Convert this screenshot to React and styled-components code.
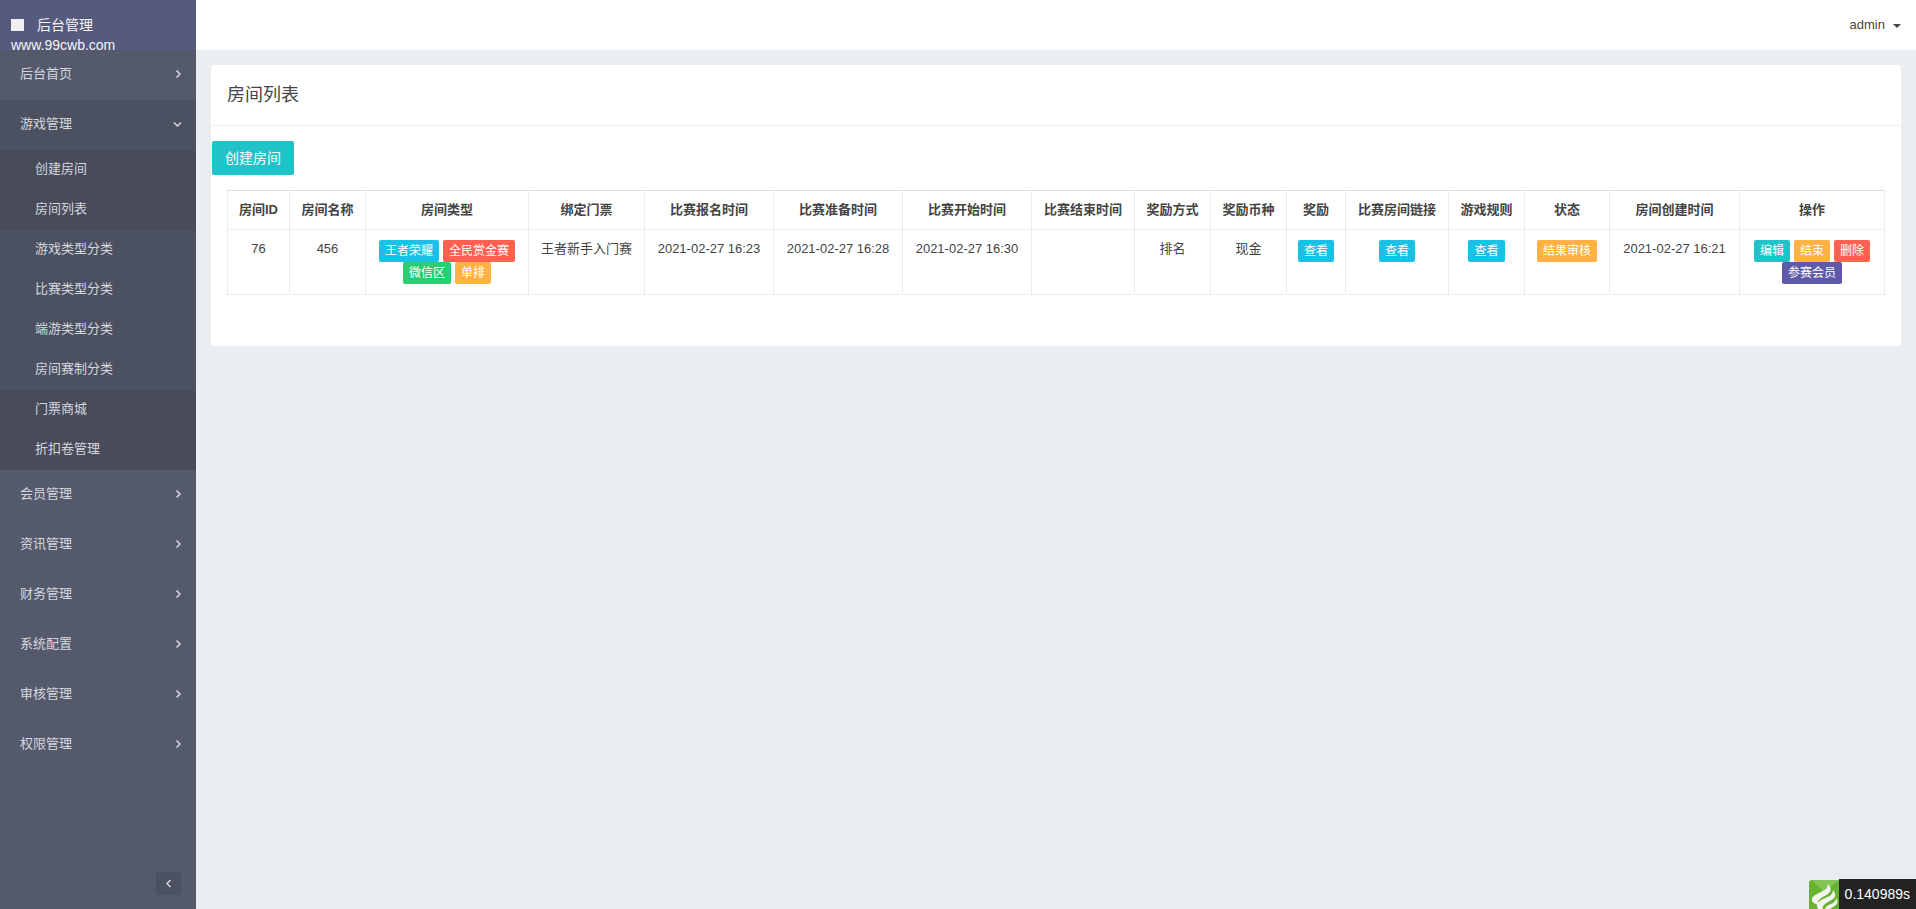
import React, { useState } from 'react';
import styled, { createGlobalStyle } from 'styled-components';

const GlobalStyle = createGlobalStyle`
  * {
    box-sizing: border-box;
  }

  body {
    background: #e9edf0;
    color: #444;
    font-family: 'Liberation Sans', 'Noto Sans CJK SC', sans-serif;
    font-size: 13px;
    line-height: 20px;
    margin: 0;
  }

  button {
    border: none;
    cursor: pointer;
    font-family: inherit;
  }
`;

const Layout = styled.div`
  display: flex;
  min-height: 100vh;
`;

const Sidebar = styled.aside`
  background: #545a6c;
  display: flex;
  flex: none;
  flex-direction: column;
  width: 196px;
`;

const Brand = styled.div`
  background: #565a7c;
  color: #f4f4f6;
  font-size: 14px;
  height: 50px;
  padding: 15px 11px 0;
`;

const BrandTitle = styled.div`
  align-items: center;
  display: flex;
  gap: 13px;
`;

const BrandMark = styled.span`
  background: #f0f0f3;
  height: 12px;
  width: 13px;
`;

const Menu = styled.ul`
  list-style: none;
  margin: 0;
  padding: 0;
`;

const MenuButton = styled.button`
  align-items: center;
  background: ${({ $open }) => ($open ? '#4c5161' : 'transparent')};
  color: #d5d7de;
  display: flex;
  font-size: 13px;
  height: 50px;
  justify-content: space-between;
  line-height: 20px;
  padding: 0 14px 2px 20px;
  width: 100%;
`;

const MenuLink = styled.a`
  background: ${({ $light }) => ($light ? '#4c5161' : '#474b5a')};
  color: #d5d7de;
  display: block;
  height: 40px;
  line-height: 20px;
  padding: 9px 35px;
  text-decoration: none;
`;

const Foot = styled.div`
  display: flex;
  justify-content: flex-end;
  margin-top: auto;
  padding: 14px 15px;
`;

const Collapse = styled.button`
  align-items: center;
  background: #4c5161;
  border-radius: 2px;
  color: #d5d7de;
  display: flex;
  height: 23px;
  justify-content: center;
  padding: 0;
  width: 25px;
`;

const Main = styled.main`
  flex: 1;
  min-width: 0;
`;

const Topbar = styled.header`
  background: #fff;
  display: flex;
  height: 50px;
  justify-content: flex-end;
  padding: 0 15px;
`;

const UserButton = styled.button`
  align-items: center;
  background: none;
  color: #444;
  display: flex;
  font-size: 13px;
  gap: 8px;
  padding: 0 0 2px;
`;

const Caret = styled.span`
  border-left: 4px solid transparent;
  border-right: 4px solid transparent;
  border-top: 4px solid #444;
  margin-top: 3px;
`;

const Panel = styled.section`
  background: #fff;
  border: 1px solid #fff;
  border-radius: 2px;
  margin: 15px;
  padding-bottom: 50px;
`;

const PanelTitle = styled.h1`
  border-bottom: 1px solid #e9edf0;
  font-size: 18px;
  font-weight: 400;
  line-height: 24px;
  margin: 0 0 15px;
  padding: 17px 15px 18px;
`;

const CreateButton = styled.button`
  background: #1fc3c8;
  border-radius: 2px;
  color: #fff;
  display: block;
  font-size: 14px;
  height: 34px;
  line-height: 20px;
  padding: 0 13px;
`;

const TableWrap = styled.div`
  padding: 15px 15px 0;
`;

const Table = styled.table`
  border-collapse: collapse;
  text-align: center;
  width: 100%;
`;

const Th = styled.th`
  border: 1px solid #e9ecf2;
  border-top-color: #ddd;
  font-weight: 700;
  padding: 9px 8px;
  white-space: nowrap;
  width: ${({ $width }) => $width}px;
`;

const Td = styled.td`
  border: 1px solid #e9ecf2;
  padding: 9px 8px;
  vertical-align: top;
  white-space: nowrap;
`;

const Tags = styled.div`
  display: flex;
  flex-wrap: wrap;
  column-gap: 4px;
  justify-content: center;
  padding: 1px 0;
`;

const colors = {
  info: '#19c1e6',
  danger: '#ff604f',
  success: '#2ecc71',
  warning: '#ffb244',
  primary: '#1fc3c8',
  purple: '#5f5aa8',
};

const Tag = styled.span`
  background: ${({ $kind }) => colors[$kind]};
  border-radius: 2px;
  color: #fff;
  font-size: 12px;
  line-height: 22px;
  padding: 0 6px;
`;

const TagButton = styled(Tag).attrs({ as: 'button', type: 'button' })``;

const Trace = styled.div`
  bottom: 0;
  display: flex;
  height: 30px;
  position: fixed;
  right: 0;
`;

const TraceTime = styled.div`
  background: #232323;
  color: #fff;
  font-size: 14px;
  line-height: 30px;
  padding: 0 6px;
`;

const submenu = [
  { name: '创建房间' },
  { name: '房间列表' },
  { name: '游戏类型分类', light: true },
  { name: '比赛类型分类', light: true },
  { name: '端游类型分类', light: true },
  { name: '房间赛制分类', light: true },
  { name: '门票商城' },
  { name: '折扣卷管理' },
];

const menu = [
  { name: '后台首页' },
  { name: '游戏管理', children: submenu },
  { name: '会员管理' },
  { name: '资讯管理' },
  { name: '财务管理' },
  { name: '系统配置' },
  { name: '审核管理' },
  { name: '权限管理' },
];

const heads = [
  ['房间ID', 62],
  ['房间名称', 76],
  ['房间类型', 163],
  ['绑定门票', 116],
  ['比赛报名时间', 129],
  ['比赛准备时间', 129],
  ['比赛开始时间', 129],
  ['比赛结束时间', 103],
  ['奖励方式', 76],
  ['奖励币种', 76],
  ['奖励', 59],
  ['比赛房间链接', 103],
  ['游戏规则', 76],
  ['状态', 85],
  ['房间创建时间', 130],
  ['操作', 145],
];

const rooms = [
  {
    id: 76,
    name: '456',
    types: [['info', '王者荣耀'], ['danger', '全民赏金赛'], ['success', '微信区'], ['warning', '单排']],
    ticket: '王者新手入门赛',
    signup: '2021-02-27 16:23',
    ready: '2021-02-27 16:28',
    start: '2021-02-27 16:30',
    end: '',
    rewardBy: '排名',
    currency: '现金',
    status: '结果审核',
    created: '2021-02-27 16:21',
  },
];

const actions = [['primary', '编辑'], ['warning', '结束'], ['danger', '删除'], ['purple', '参赛会员']];

const paths = {
  right: 'M1.5 0.5 5 4 1.5 7.5',
  left: 'M5.5 1 2 4.5 5.5 8',
  down: 'M1 2.5 4.5 6 8 2.5',
};

const Arrow = ({ to }) => (
  <svg width={to === 'down' ? 9 : 7} height="9" viewBox={to === 'down' ? '0 0 9 9' : '0 0 7 9'} aria-hidden="true">
    <path d={paths[to]} fill="none" stroke="currentColor" strokeWidth="1.5" />
  </svg>
);

const TraceLogo = () => (
  <svg width="30" height="30" viewBox="0 0 30 30" aria-hidden="true">
    <path d="M0 30V4Q0 1 3 1H30V30Z" fill="#69b132" />
    <path d="M3 1H30L15 13Z" fill="#85c454" />
    <path d="M19 5C25 11 20 15 14 18C9 21 8 23 10 26C3 25 0 20 6 16C13 12 19 11 19 5Z" fill="#f1f5ee" />
    <path d="M24 11C29 17 25 20 19 23C14 26 13 28 14 30H9C7 27 8 24 12 21C18 18 24 17 24 11Z" fill="#f1f5ee" />
    <path d="M27 19C30 23 28 26 24 28L21 30H16C17 27 19 26 22 25C25 24 27 22 27 19Z" fill="#f1f5ee" />
  </svg>
);

const SideMenu = () => {
  const [open, setOpen] = useState('游戏管理');

  return (
    <Menu>
      {menu.map(({ name, children }) => (
        <li key={name}>
          <MenuButton
            type="button"
            $open={open === name}
            aria-expanded={open === name}
            onClick={() => setOpen(open === name ? '' : name)}
          >
            {name}
            <Arrow to={open === name ? 'down' : 'right'} />
          </MenuButton>
          {children && open === name && (
            <Menu>
              {children.map(item => (
                <li key={item.name}>
                  <MenuLink href="#" $light={item.light}>{item.name}</MenuLink>
                </li>
              ))}
            </Menu>
          )}
        </li>
      ))}
    </Menu>
  );
};

const ViewCell = () => (
  <Td>
    <Tags>
      <TagButton $kind="info">查看</TagButton>
    </Tags>
  </Td>
);

const RoomRow = ({ room }) => (
  <tr>
    <Td>{room.id}</Td>
    <Td>{room.name}</Td>
    <Td>
      <Tags>
        {room.types.map(([kind, text]) => <Tag key={text} $kind={kind}>{text}</Tag>)}
      </Tags>
    </Td>
    <Td>{room.ticket}</Td>
    <Td>{room.signup}</Td>
    <Td>{room.ready}</Td>
    <Td>{room.start}</Td>
    <Td>{room.end}</Td>
    <Td>{room.rewardBy}</Td>
    <Td>{room.currency}</Td>
    <ViewCell />
    <ViewCell />
    <ViewCell />
    <Td>
      <Tags>
        <Tag $kind="warning">{room.status}</Tag>
      </Tags>
    </Td>
    <Td>{room.created}</Td>
    <Td>
      <Tags>
        {actions.map(([kind, text]) => <TagButton key={text} $kind={kind}>{text}</TagButton>)}
      </Tags>
    </Td>
  </tr>
);

const App = () => (
  <>
    <GlobalStyle />
    <Layout>
      <Sidebar>
        <Brand>
          <BrandTitle>
            <BrandMark />
            后台管理
          </BrandTitle>
          www.99cwb.com
        </Brand>
        <SideMenu />
        <Foot>
          <Collapse type="button" aria-label="收起菜单">
            <Arrow to="left" />
          </Collapse>
        </Foot>
      </Sidebar>
      <Main>
        <Topbar>
          <UserButton type="button">
            admin
            <Caret />
          </UserButton>
        </Topbar>
        <Panel>
          <PanelTitle>房间列表</PanelTitle>
          <CreateButton type="button">创建房间</CreateButton>
          <TableWrap>
            <Table>
              <thead>
                <tr>
                  {heads.map(([head, width]) => <Th key={head} scope="col" $width={width}>{head}</Th>)}
                </tr>
              </thead>
              <tbody>
                {rooms.map(room => <RoomRow key={room.id} room={room} />)}
              </tbody>
            </Table>
          </TableWrap>
        </Panel>
      </Main>
    </Layout>
    <Trace>
      <TraceLogo />
      <TraceTime>0.140989s</TraceTime>
    </Trace>
  </>
);

export default App;
